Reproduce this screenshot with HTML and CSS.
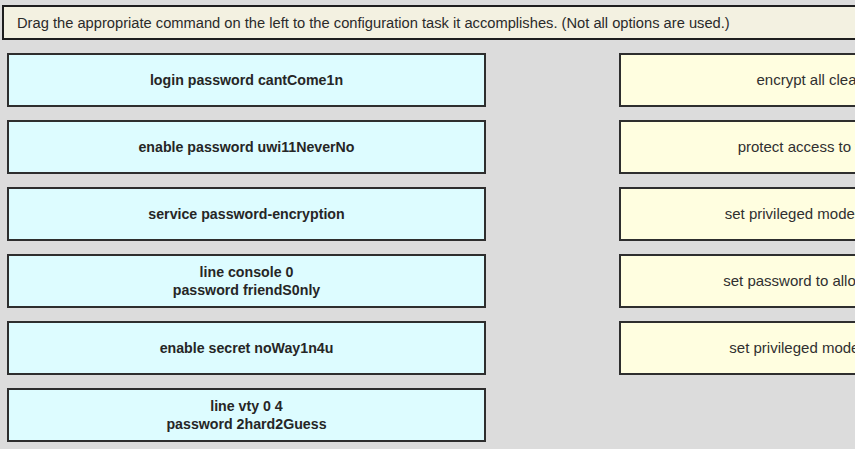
FILE: index.html
```html
<!DOCTYPE html>
<html lang="en">
<head>
    <meta charset="UTF-8">
    <meta name="viewport" content="width=device-width, initial-scale=1.0">
    <title>Drag and Drop</title>
    <link rel="stylesheet" href="styles.css">
</head>
<body>
    <div class="stage">
        <div class="prompt">Drag the appropriate command on the left to the configuration task it accomplishes. (Not all options are used.)</div>

        <div class="board">
            <div class="column commands">
                <div class="item">login password cantCome1n</div>
                <div class="item">enable password uwi11NeverNo</div>
                <div class="item">service password-encryption</div>
                <div class="item">line console 0<br>password friendS0nly</div>
                <div class="item">enable secret noWay1n4u</div>
                <div class="item">line vty 0 4<br>password 2hard2Guess</div>
            </div>
            <div class="column tasks">
                <div class="item">encrypt all cleartext passwords</div>
                <div class="item">protect access to the end user mode</div>
                <div class="item">set privileged mode encrypted password</div>
                <div class="item">set password to allow Telnet connections</div>
                <div class="item">set privileged mode cleartext password</div>
            </div>
        </div>
    </div>
</body>
</html>
```

FILE: styles.css
```css
html, body {
    margin: 0;
    height: 100%;
    overflow: hidden;
}
body {
    font-family: 'Liberation Sans', Arial, sans-serif;
    background-color: #dcdcdc;
    color: #222;
}
.stage {
    width: 1100px;
    padding-top: 5px;
}
.prompt {
    margin-left: 2px;
    height: 35px;
    box-sizing: border-box;
    border: 2px solid #1e1e1e;
    background-color: #f3f1e1;
    padding: 0 0 0 13px;
    display: flex;
    align-items: center;
    font-size: 14.7px;
    color: #2a2a2a;
}
.board {
    display: flex;
    gap: 133px;
    margin: 13px 0 0 7px;
}
.column {
    display: flex;
    flex-direction: column;
    gap: 13px;
}
.commands {
    width: 479px;
}
.tasks {
    width: 480px;
}
.item {
    height: 54px;
    box-sizing: border-box;
    border: 2px solid #2e2e2e;
    display: flex;
    align-items: center;
    justify-content: center;
    text-align: center;
    line-height: 18px;
}
.commands .item {
    background-color: #ddfcff;
    font-weight: bold;
    font-size: 14.2px;
    color: #262626;
}
.tasks .item {
    background-color: #fffee0;
    font-size: 15px;
    color: #303030;
}
```
